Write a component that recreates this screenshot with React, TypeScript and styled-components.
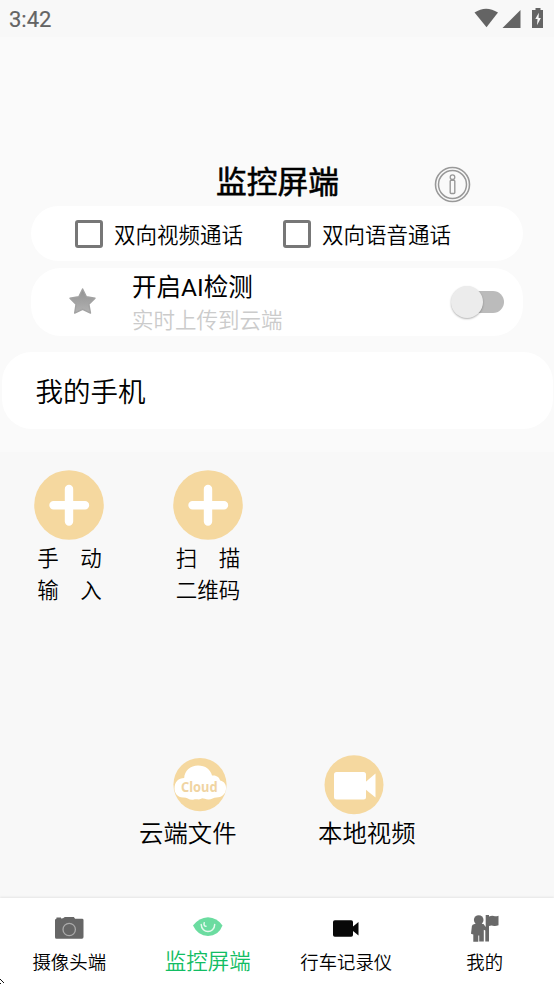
import React from "react";
import styled, { createGlobalStyle } from "styled-components";

const GlobalStyle = createGlobalStyle`
  *, *::before, *::after { box-sizing: border-box; }
  body { margin: 0; background: #f8f8f8; }
`;

const Screen = styled.div`
  position: relative;
  display: flex;
  flex-direction: column;
  width: 554px;
  height: 984px;
  overflow: hidden;
  background: #f8f8f8;
  color: #000;
  font-family: "Noto Sans CJK SC", sans-serif;
  font-weight: 350;
  svg { display: block; flex: none; }
`;

const StatusBar = styled.header`
  display: flex;
  justify-content: space-between;
  height: 37px;
  padding: 0 8px 0 9px;
  background: #f8f8f8;
  font: 400 22px/39px Roboto, sans-serif;
  -webkit-text-stroke: 0.2px #646464;
  color: #646464;
`;

const Header = styled.section`
  display: flex;
  flex-direction: column;
  height: 415px;
  background: #fafafa;
`;

const TitleRow = styled.div`
  display: grid;
  grid-template-columns: 1fr auto 1fr;
  height: 169px;
  padding: 121px 0 0 1px;
`;

const Title = styled.h1`
  grid-column: 2;
  margin: 0;
  font-size: 30.7px;
  line-height: 44px;
  font-weight: 400;
  -webkit-text-stroke: 0.6px #000;
`;

const InfoButton = styled.button`
  width: 37px;
  height: 37px;
  margin: 8px 0 0 95px;
  padding: 0;
  border: 0;
  background: none;
`;

const Card = styled.div<{ $height: number; $radius: number }>`
  display: flex;
  align-items: center;
  flex: none;
  height: ${(p) => p.$height}px;
  margin: 0 31px 7px;
  border-radius: ${(p) => p.$radius}px;
  background: #fff;
`;

const Option = styled.label`
  display: flex;
  align-items: center;
  width: 208px;
  font-size: 21.5px;
  line-height: 54px;
  white-space: nowrap;
`;

const OptionsCard = styled(Card)`
  padding-left: 44px;
`;

const CheckBox = styled.span`
  width: 28px;
  height: 28px;
  margin-right: 11px;
  border: 3px solid #777;
  border-radius: 3px;
`;

const DetectText = styled.div`
  flex: 1;
  padding-left: 35px;
`;

const DetectTitle = styled.div`
  padding-top: 1px;
  font-family: Roboto, "Noto Sans CJK SC", sans-serif;
  font-size: 24.5px;
  font-weight: 400;
  line-height: 32px;
`;

const DetectNote = styled.div`
  font-size: 21.5px;
  line-height: 29px;
  color: #cbcbcb;
`;

const Switch = styled.span`
  display: flex;
  align-items: center;
  width: 42px;
  height: 22px;
  margin-right: 19px;
  border-radius: 11px;
  background: #bbb;
`;

const Thumb = styled.span`
  flex: none;
  width: 32px;
  height: 32px;
  margin-left: -11px;
  border-radius: 50%;
  background: #ececec;
  box-shadow: 0 1px 2px rgba(0, 0, 0, 0.3);
`;

const PhoneCard = styled(Card)`
  margin: 9px 1.5px 0;
  padding: 0 0 2px 34px;
  font-size: 27.5px;
`;

const AddGrid = styled.section`
  display: grid;
  grid-template-columns: repeat(4, 138.5px);
  height: 302px;
  padding-top: 18px;
`;

const AddItem = styled.button`
  display: flex;
  flex-direction: column;
  align-items: center;
  padding: 0;
  border: 0;
  background: none;
  color: inherit;
  font: 350 21.5px/32px "Noto Sans CJK SC", sans-serif;
`;

const AddLabel = styled.span`
  display: block;
  width: 65px;
  margin: 1px 0 0 1px;
  text-align: left;
  white-space: pre;
`;

const Files = styled.section`
  display: flex;
  gap: 81px;
  height: 144px;
  padding-left: 139px;
`;

const FileItem = styled.div`
  display: flex;
  flex-direction: column;
  width: 98px;
  font-size: 24.4px;
  line-height: 34px;
  white-space: nowrap;
`;

const FileIcon = styled.div<{ $indent: number }>`
  height: 61px;
  padding-left: ${(p) => p.$indent}px;
`;

const TabBar = styled.nav`
  display: grid;
  grid-template-columns: repeat(4, 138.5px);
  height: 86px;
  padding-top: 12px;
  background: #fff;
  box-shadow: 0 -1px 2px rgba(0, 0, 0, 0.08);
`;

const Tab = styled.button<{ $active?: boolean }>`
  display: flex;
  flex-direction: column;
  align-items: center;
  padding: 0;
  border: 0;
  background: none;
  color: ${(p) => (p.$active ? "#12bd63" : "#000")};
  font-family: inherit;
  font-weight: 350;
  font-size: ${(p) => (p.$active ? 21.5 : 18.4)}px;
  line-height: ${(p) => (p.$active ? 28 : 30)}px;
`;

const CornerMark = styled.svg`
  position: absolute;
  left: 0;
  bottom: 0;
`;

const StatusIcons = () => (
  <svg width="72" height="37" viewBox="474 0 72 37" fill="#646464">
    <path d="M474.5 12.6Q486 5 498 12.6L486.5 27.3Z" />
    <path d="M520.5 10v18h-18Z" />
    <path d="M535.5 8h5v2h2.5v18h-11V10h3.5Z" />
    <path d="M538.8 12.8 535.3 19h2.2l-.5 6.2 3.9-7.2h-2.3Z" fill="#f8f8f8" />
  </svg>
);

const InfoIcon = () => (
  <svg width="37" height="37" viewBox="0 0 37 37" fill="none" stroke="#999">
    <circle cx="18.5" cy="18.5" r="17" strokeWidth="1.6" />
    <circle cx="18.5" cy="18.5" r="14" strokeWidth="1.5" />
    <circle cx="18.5" cy="11.2" r="2.3" strokeWidth="1.3" />
    <rect x="16.2" y="14.2" width="4.6" height="13.3" rx="1" strokeWidth="1.4" />
  </svg>
);

const StarIcon = () => (
  <svg width="66" height="68" viewBox="31 268 66 68">
    <defs>
      <linearGradient id="starFill" x1="0" x2="0" y1="0" y2="1">
        <stop offset="0" stopColor="#929292" />
        <stop offset="1" stopColor="#b2b2b2" />
      </linearGradient>
    </defs>
    <path
      d="M82.6 289 86.4 296.7 95 298.2 88.9 304.3 90.5 313.1 82.6 309.3 74.7 313.1 76 304.3 70 298.2 78.8 296.7Z"
      fill="url(#starFill)"
      stroke="#a2a2a2"
      strokeWidth="1.4"
      strokeLinejoin="round"
    />
  </svg>
);

const PlusIcon = () => (
  <svg width="70" height="70" viewBox="0 0 70 70">
    <circle cx="35" cy="35" r="34.8" fill="#f5d89f" />
    <path d="M35 19v32.500M19.500 35.2h31.500" stroke="#fff" strokeWidth="8.4" strokeLinecap="round" />
  </svg>
);

const CloudIcon = () => (
  <svg width="54" height="61" viewBox="173 754 54 61">
    <circle cx="200" cy="784.6" r="26.6" fill="#f5d89f" />
    <path
      d="M183 797.5C177.500 797.500 174.500 793 174.500 788.500C174.500 782 178.500 778 184.200 778C184.500 770.500 190.500 765.500 198 765.500C205.500 765.500 210.500 769.500 212 775.500C216.500 774.800 219.500 777.500 220.200 780.500C224.500 781.500 226.500 785 226 789C225.500 794.500 221.500 797.500 216.500 797.500C213.500 797.500 211.800 799.500 208.500 799.500C205.500 799.500 204 798.300 202 798.300C199.500 800.500 196.500 798.500 194 799.500C189 800.500 187 797 183 797.500Z"
      fill="#fff"
    />
    <text
      x="181"
      y="792"
      textLength="36.5"
      lengthAdjust="spacingAndGlyphs"
      fill="#f0d4a2"
      fontFamily="Noto Sans"
      fontSize="14"
      fontWeight="700"
    >
      Cloud
    </text>
  </svg>
);

const VideoIcon = () => (
  <svg width="60" height="61" viewBox="324 754 60 61">
    <circle cx="354" cy="784.8" r="29.5" fill="#f5d89f" />
    <rect x="334" y="772" width="32" height="27.5" rx="2.5" fill="#fff" />
    <path d="M365 782.5 375.5 773.5v24L365 789Z" fill="#fff" />
  </svg>
);

const CameraIcon = () => (
  <svg width="30" height="36" viewBox="54 910 30 36">
    <path
      d="M56.500 918.500v-1h4.500v1l2-.2 1.800-1.300h9l1.300 1.800h7q1.400 0 1.400 1.300V937q0 1.800-1.500 1.800H56.500q-1.500 0-1.500-1.500V920q0-1 1.500-1.500Z"
      fill="#666"
    />
    <circle cx="69.2" cy="929.5" r="6.2" fill="none" stroke="#aaa" strokeWidth="1.3" />
  </svg>
);

const EyeIcon = () => (
  <svg width="30" height="36" viewBox="193 910 30 36">
    <path
      d="M193 925.500Q199 917.500 208 917.200Q217 917.500 222.500 925.500Q218.500 936 208 936Q198 936 193 925.500Z"
      fill="#6bdca0"
    />
    <path
      d="M201.200 924.500C201.500 933.800 214.500 933.800 214.700 924.500M204.200 922.800C203.500 925 204.500 926.200 206 926.200"
      fill="none"
      stroke="#e5faee"
      strokeWidth="1.5"
      strokeLinecap="round"
    />
  </svg>
);

const RecorderIcon = () => (
  <svg width="28" height="36" viewBox="332.5 910 28 36">
    <rect x="333.5" y="920.3" width="20" height="16.5" rx="1.8" fill="#080808" />
    <path d="M353.5 926.5 359 922v13.500L353.500 931Z" fill="#080808" />
  </svg>
);

const PersonIcon = () => (
  <svg width="30" height="36" viewBox="470.5 910 30 36" fill="#696969">
    <circle cx="479.2" cy="920" r="4.8" />
    <path d="M475 924h9l2.200 3V915h3.300v1.500q3-1.200 5-.4 1.800.6 4.500-.3v9.500q-3 1.200-5.500.5-2-.5-4 .2v15.500h-3.700v-11l-1.500-.7v11.700h-4.600V935.500h-.9v6.200h-5v-7.200l-2.300-.8.900-7.700q.3-1.700 2.600-2Z" />
  </svg>
);

export default function App() {
  return (
    <>
      <GlobalStyle />
      <Screen>
        <StatusBar>
          <span>3:42</span>
          <StatusIcons />
        </StatusBar>
        <Header>
          <TitleRow>
            <Title>监控屏端</Title>
            <InfoButton aria-label="info">
              <InfoIcon />
            </InfoButton>
          </TitleRow>
          <OptionsCard $height={55} $radius={27.5}>
            <Option>
              <CheckBox />
              双向视频通话
            </Option>
            <Option>
              <CheckBox />
              双向语音通话
            </Option>
          </OptionsCard>
          <Card $height={68} $radius={30}>
            <StarIcon />
            <DetectText>
              <DetectTitle>开启AI检测</DetectTitle>
              <DetectNote>实时上传到云端</DetectNote>
            </DetectText>
            <Switch>
              <Thumb />
            </Switch>
          </Card>
          <PhoneCard $height={77} $radius={30}>
            我的手机
          </PhoneCard>
        </Header>
        <AddGrid>
          <AddItem>
            <PlusIcon />
            <AddLabel>{"手　动\n输　入"}</AddLabel>
          </AddItem>
          <AddItem>
            <PlusIcon />
            <AddLabel>{"扫　描\n二维码"}</AddLabel>
          </AddItem>
        </AddGrid>
        <Files>
          <FileItem>
            <FileIcon $indent={34}>
              <CloudIcon />
            </FileIcon>
            云端文件
          </FileItem>
          <FileItem>
            <FileIcon $indent={6}>
              <VideoIcon />
            </FileIcon>
            本地视频
          </FileItem>
        </Files>
        <TabBar>
          <Tab>
            <CameraIcon />
            摄像头端
          </Tab>
          <Tab $active>
            <EyeIcon />
            监控屏端
          </Tab>
          <Tab>
            <RecorderIcon />
            行车记录仪
          </Tab>
          <Tab>
            <PersonIcon />
            我的
          </Tab>
        </TabBar>
        <CornerMark width="5" height="5" viewBox="0 0 5 5">
          <path d="M0 .5h1M1 1.500h1M2 2.500h1M3 3.500h1M0 4.500h1" stroke="#111" />
        </CornerMark>
      </Screen>
    </>
  );
}
